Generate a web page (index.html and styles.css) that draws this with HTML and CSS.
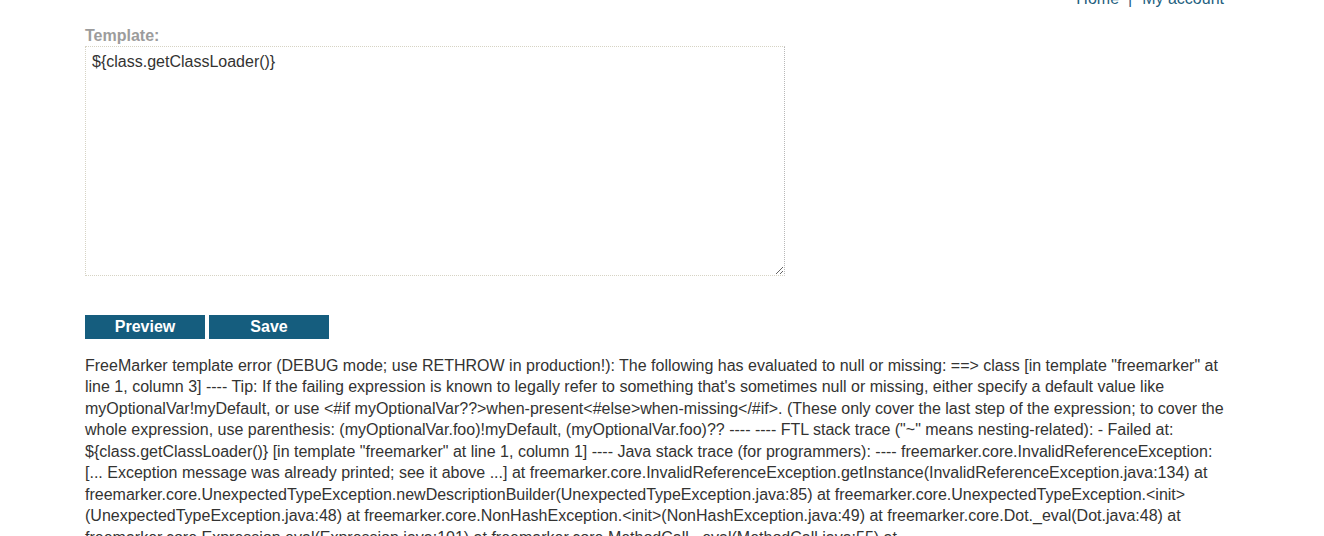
FILE: index.html
```html
<!DOCTYPE html>
<html>
<head>
<meta charset="utf-8">
<link rel="stylesheet" href="styles.css">
</head>
<body>
<div class="page">
  <header class="top-links">
    <a href="#">Home</a><span class="sep">|</span><a href="#">My account</a>
  </header>
  <form class="template-form">
    <label class="field-label">Template:</label>
    <textarea class="template-input">${class.getClassLoader()}</textarea>
    <div class="actions">
      <button type="button" class="btn">Preview</button>
      <button type="button" class="btn">Save</button>
    </div>
  </form>
  <div class="error-output">FreeMarker template error (DEBUG mode; use RETHROW in production!): The following has evaluated to null or missing: ==&gt; class [in template "freemarker" at line 1, column 3] ---- Tip: If the failing expression is known to legally refer to something that's sometimes null or missing, either specify a default value like myOptionalVar!myDefault, or use &lt;#if myOptionalVar??&gt;when-present&lt;#else&gt;when-missing&lt;/#if&gt;. (These only cover the last step of the expression; to cover the whole expression, use parenthesis: (myOptionalVar.foo)!myDefault, (myOptionalVar.foo)?? ---- ---- FTL stack trace ("~" means nesting-related): - Failed at: ${class.getClassLoader()} [in template "freemarker" at line 1, column 1] ---- Java stack trace (for programmers): ---- freemarker.core.InvalidReferenceException: [... Exception message was already printed; see it above ...] at freemarker.core.InvalidReferenceException.getInstance(InvalidReferenceException.java:134) at freemarker.core.UnexpectedTypeException.newDescriptionBuilder(UnexpectedTypeException.java:85) at freemarker.core.UnexpectedTypeException.&lt;init&gt; (UnexpectedTypeException.java:48) at freemarker.core.NonHashException.&lt;init&gt;(NonHashException.java:49) at freemarker.core.Dot._eval(Dot.java:48) at freemarker.core.Expression.eval(Expression.java:101) at freemarker.core.MethodCall._eval(MethodCall.java:55) at freemarker.core.Expression.eval(Expression.java:101) at freemarker.core.DollarVariable.calculateInterpolatedStringOrMarkup(DollarVariable.java:100)</div>
</div>
</body>
</html>
```
FILE: styles.css
```css
html, body {
  margin: 0;
  padding: 0;
  background: #fff;
}
body {
  font-family: "Liberation Sans", Arial, sans-serif;
  font-size: 16px;
  color: #333332;
  overflow: hidden;
  height: 536px;
}
.page {
  width: 1140px;
  margin-left: 85px;
}
.top-links {
  display: flex;
  justify-content: flex-end;
  align-items: center;
  margin-top: -12px;
  height: 22px;
  line-height: 22px;
  font-size: 16px;
  padding-right: 1px;
}
.top-links a {
  color: #1f5f80;
  text-decoration: none;
}
.sep {
  color: #1f5f80;
  margin: 0 10px 0 9px;
}
.template-form {
  display: flex;
  flex-direction: column;
  margin-top: 17px;
}
.field-label {
  font-weight: bold;
  color: #9c9c9c;
  font-size: 16px;
  line-height: 18px;
  height: 18px;
  margin-bottom: 1px;
}
.template-input {
  box-sizing: border-box;
  width: 700px;
  height: 230px;
  border: 1px dotted #d6d3c4;
  border-right-color: #b8b8b8;
  padding: 6px 6px;
  font-family: "Liberation Sans", Arial, sans-serif;
  font-size: 16px;
  line-height: 18px;
  color: #333332;
  resize: both;
  outline: none;
  margin: 0;
}
.actions {
  display: flex;
  gap: 4px;
  margin-top: 39px;
}
.btn {
  width: 120px;
  height: 24px;
  background: #155d7e;
  color: #fff;
  border: none;
  padding: 0;
  font-family: "Liberation Sans", Arial, sans-serif;
  font-weight: bold;
  font-size: 16px;
  line-height: 24px;
  cursor: pointer;
}
.error-output {
  margin-top: 16px;
  line-height: 21.45px;
  font-size: 16px;
  color: #333332;
}
```
